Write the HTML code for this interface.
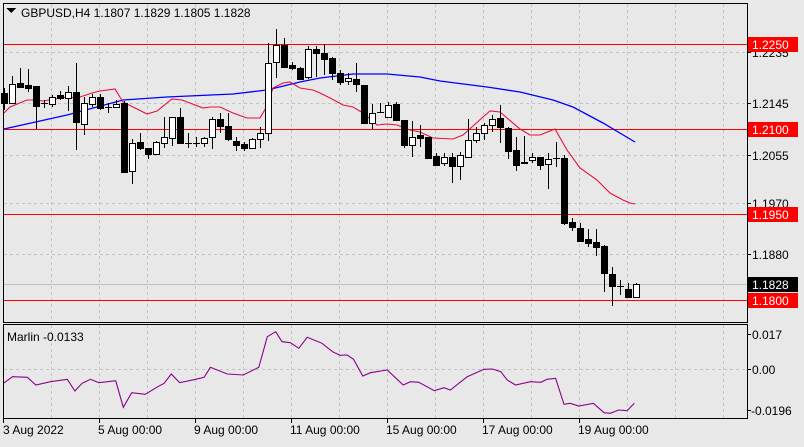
<!DOCTYPE html>
<html><head><meta charset="utf-8">
<style>
html,body{margin:0;padding:0;background:#e8e8e8;}
body{width:804px;height:442px;overflow:hidden;font-family:"Liberation Sans",sans-serif;}
svg text{font-family:"Liberation Sans",sans-serif;font-size:12px;fill:#000;}
</style></head>
<body>
<svg id="s" width="804" height="442" viewBox="0 0 804 442" xmlns="http://www.w3.org/2000/svg" shape-rendering="crispEdges">
<rect width="804" height="442" fill="#e8e8e8"/>
<g id="grid" stroke="#c4c4c4" stroke-dasharray="3,3" stroke-width="1"></g>
<line x1="3" y1="284.5" x2="747" y2="284.5" stroke="#c0c0c0"/>
<g stroke="#ff0000" stroke-width="1">
<line x1="3" y1="44.5" x2="747" y2="44.5"/>
<line x1="3" y1="129.5" x2="747" y2="129.5"/>
<line x1="3" y1="214.5" x2="747" y2="214.5"/>
<line x1="3" y1="300.5" x2="747" y2="300.5"/>
</g>
<polyline id="blue" fill="none" stroke="#0000ff" stroke-width="1.3" shape-rendering="auto"/>
<polyline id="red" fill="none" stroke="#e8103c" stroke-width="1.1" shape-rendering="auto"/>
<g id="candles"></g>
<polyline id="ind" fill="none" stroke="#8b008b" stroke-width="1.1" shape-rendering="auto"/>
<!-- frames -->
<rect x="3.5" y="3.5" width="744" height="319" fill="none" stroke="#000"/>
<rect x="3.5" y="324.5" width="744" height="94" fill="none" stroke="#000"/>
<g stroke="#000">
<line x1="747" y1="52.5" x2="751" y2="52.5"/><line x1="747" y1="103.5" x2="751" y2="103.5"/>
<line x1="747" y1="155.5" x2="751" y2="155.5"/><line x1="747" y1="203.5" x2="751" y2="203.5"/>
<line x1="747" y1="254.5" x2="751" y2="254.5"/>
<line x1="747" y1="334.5" x2="751" y2="334.5"/><line x1="747" y1="369.5" x2="751" y2="369.5"/><line x1="747" y1="410.5" x2="751" y2="410.5"/>
<line x1="3.5" y1="418" x2="3.5" y2="423"/><line x1="99.5" y1="418" x2="99.5" y2="423"/><line x1="195.5" y1="418" x2="195.5" y2="423"/>
<line x1="291.5" y1="418" x2="291.5" y2="423"/><line x1="387.5" y1="418" x2="387.5" y2="423"/><line x1="483.5" y1="418" x2="483.5" y2="423"/><line x1="579.5" y1="418" x2="579.5" y2="423"/>
</g>
<path d="M6 8 L16 8 L11 13 Z" fill="#000"/>
<text x="21" y="17">GBPUSD,H4  1.1807 1.1829 1.1805 1.1828</text>
<text x="7" y="341">Marlin -0.0133</text>
<text x="752" y="57">1.2235</text>
<text x="752" y="108">1.2145</text>
<text x="752" y="160">1.2055</text>
<text x="752" y="208">1.1970</text>
<text x="752" y="259">1.1880</text>
<rect x="748" y="37" width="50" height="15" fill="#ff0000"/><text x="752" y="49" style="fill:#fff">1.2250</text>
<rect x="748" y="122" width="50" height="15" fill="#ff0000"/><text x="752" y="134" style="fill:#fff">1.2100</text>
<rect x="748" y="207" width="50" height="15" fill="#ff0000"/><text x="752" y="219" style="fill:#fff">1.1950</text>
<rect x="748" y="277" width="50" height="15" fill="#000"/><text x="752" y="289" style="fill:#fff">1.1828</text>
<rect x="748" y="293" width="50" height="15" fill="#ff0000"/><text x="752" y="305" style="fill:#fff">1.1800</text>
<text x="752" y="339">0.017</text>
<text x="752" y="374">0.00</text>
<text x="751" y="415">-0.0196</text>
<text x="3" y="434">3 Aug 2022</text>
<text x="98" y="434">5 Aug 00:00</text>
<text x="194" y="434">9 Aug 00:00</text>
<text x="290" y="434">11 Aug 00:00</text>
<text x="386" y="434">15 Aug 00:00</text>
<text x="482" y="434">17 Aug 00:00</text>
<text x="578" y="434">19 Aug 00:00</text>
</svg>
<script>
var NS="http://www.w3.org/2000/svg";
function el(p,t,a){var e=document.createElementNS(NS,t);for(var k in a)e.setAttribute(k,a[k]);p.appendChild(e);return e;}
var g=document.getElementById('grid');
for(var x=51;x<=723;x+=48){el(g,'line',{x1:x+.5,y1:4,x2:x+.5,y2:322});el(g,'line',{x1:x+.5,y1:325,x2:x+.5,y2:418});}
[52,103,155,203,254].forEach(function(y){el(g,'line',{x1:4,y1:y+.5,x2:747,y2:y+.5});});
el(g,'line',{x1:4,y1:369.5,x2:747,y2:369.5});
// [open, close, high, low] in pixel y
var C=[[93,103,88,110],[103,84,76,103],[83,87,68,88],[85,88,69,92],[86,106,86,129],[103,103,100,108],[104,97,95,107],[95,98,91,100],[98,92,86,111],[92,122,63,150],[124,103,97,135],[104,97,94,107],[97,108,94,110],[107,107,103,113],[107,104,100,108],[103,172,101,173],[171,143,139,184],[142,148,133,150],[148,154,148,159],[154,142,141,155],[143,137,117,148],[138,117,117,146],[117,143,108,144],[143,143,133,148],[143,143,137,147],[143,138,137,147],[137,119,117,149],[119,126,113,133],[126,139,113,141],[141,145,137,151],[144,148,142,151],[148,139,138,149],[139,133,127,148],[133,63,43,141],[62,45,29,78],[45,67,38,68],[65,68,62,70],[68,79,67,80],[77,49,46,79],[49,53,46,77],[53,59,44,75],[58,73,57,80],[73,82,70,85],[81,78,73,85],[79,84,63,92],[85,123,85,124],[123,113,104,129],[112,112,103,113],[117,105,102,118],[104,120,102,121],[120,145,120,148],[145,137,121,157],[135,138,125,147],[137,158,137,159],[156,165,153,166],[163,157,153,166],[157,166,153,183],[166,155,152,180],[157,140,119,158],[140,133,127,143],[133,125,123,140],[125,119,115,132],[118,127,105,143],[128,151,127,159],[150,165,137,171],[163,162,136,164],[160,157,153,163],[157,165,157,170],[164,159,153,189],[158,158,142,167],[158,223,155,225],[222,227,218,231],[228,241,223,242],[239,243,229,247],[242,247,229,256],[246,273,245,292],[274,286,267,306],[286,286,280,295],[289,297,283,298],[297,284,283,297]];
var cg=document.getElementById('candles');
C.forEach(function(c,i){
 var x=4+8*i,o=c[0],cl=c[1],h=c[2],l=c[3];
 el(cg,'line',{x1:x+.5,y1:h,x2:x+.5,y2:l,stroke:'#000'});
 var top=Math.min(o,cl),bot=Math.max(o,cl);
 if(bot-top<1){el(cg,'line',{x1:x-3,y1:top+.5,x2:x+4,y2:top+.5,stroke:'#000'});}
 else el(cg,'rect',{x:x-2.5,y:top+.5,width:6,height:bot-top,fill:cl<o?'#fff':'#000',stroke:'#000'});
});
function pts(a){return a.map(function(p){return p[0]+','+p[1];}).join(' ');}
document.getElementById('red').setAttribute('points',pts([[4,113],[10,107],[27,100],[35,100],[43,101],[67,97],[77,98],[92,93],[100,91],[115,89],[123,102],[133,107],[147,114],[157,111],[172,99],[182,100],[203,108],[210,107],[220,107],[233,113],[247,118],[260,118],[267,106],[273,88],[283,83],[290,82],[300,88],[313,90],[320,93],[330,98],[343,105],[353,107],[363,113],[377,125],[387,124],[397,125],[410,130],[420,132],[433,138],[453,139],[463,135],[473,126],[483,117],[490,111],[500,112],[507,118],[520,129],[530,135],[540,135],[555,129],[567,150],[580,168],[597,180],[610,193],[623,200],[630,203],[635,204]]));
document.getElementById('blue').setAttribute('points',pts([[4,129],[67,115],[123,100],[167,97],[233,94],[267,90],[300,82],[320,78],[353,74],[387,74],[420,77],[440,81],[487,87],[520,92],[553,100],[573,107],[603,123],[635,142]]));
var I=[[8,190],[30,170],[65,172],[85,195],[120,185],[160,178],[178,213],[195,190],[215,178],[235,188],[275,182],[293,262],[313,218],[345,223],[375,200],[390,190],[407,162],[427,188],[465,178],[485,172],[500,142],[540,162],[578,165],[615,142],[635,50],[655,35],[670,65],[690,68],[710,85],[730,52],[765,70],[790,95],[808,106],[825,105],[840,118],[862,168],[880,158],[920,150],[958,195],[975,185],[995,187],[1032,212],[1055,203],[1070,210],[1110,170],[1150,148],[1170,147],[1190,155],[1205,180],[1225,195],[1260,185],[1285,187],[1300,178],[1320,175],[1340,253],[1355,250],[1375,258],[1410,250],[1435,278],[1450,280],[1470,270],[1490,272],[1507,250]];
document.getElementById('ind').setAttribute('points',pts(I.map(function(p){return [(p[0]/2.376).toFixed(1),(320+p[1]/3).toFixed(1)];})));
</script>
</body></html>
